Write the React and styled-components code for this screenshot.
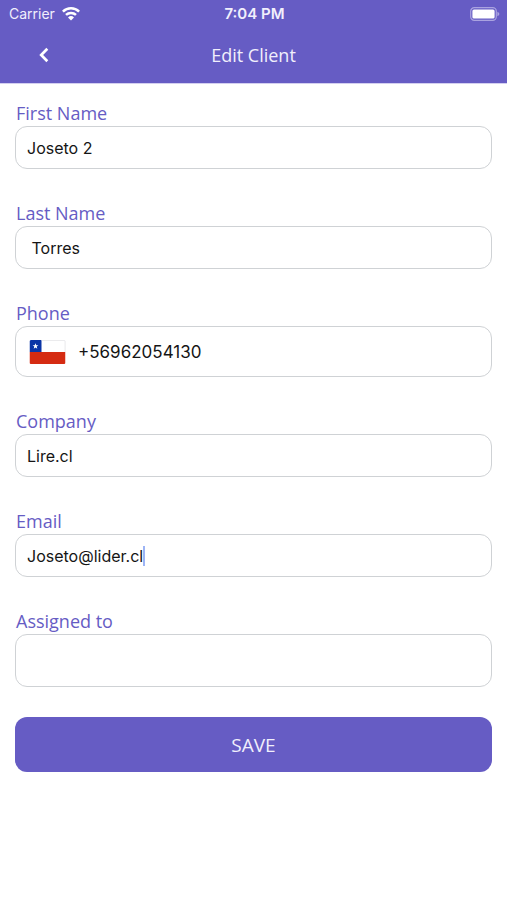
import styled, { createGlobalStyle } from "styled-components";

const colors = {
  primary: "#665cc4",
  light: "#f1effc",
  border: "#cfd2d5",
  text: "#151515",
  caret: "#9db4f5",
};

export default function App() {
  return (
    <Screen>
      <GlobalStyle />
      <Header>
        <StatusBar>
          <Carrier>
            Carrier
            <WifiIcon />
          </Carrier>
          <Time>7:04 PM</Time>
          <BatteryIcon />
        </StatusBar>
        <NavBar>
          <BackButton type="button" aria-label="Back">
            <ChevronIcon />
          </BackButton>
          <Title>Edit Client</Title>
        </NavBar>
      </Header>
      <Form onSubmit={(e) => e.preventDefault()}>
        <Field id="firstName" label="First Name" value="Joseto 2" />
        <Field id="lastName" label="Last Name" value=" Torres" />
        <Field
          id="phone"
          label="Phone"
          type="tel"
          value="+56962054130"
          height={51}
          icon={<ChileFlag />}
        />
        <Field id="company" label="Company" value="Lire.cl" />
        <Field id="email" label="Email" value="Joseto@lider.cl" editing />
        <Field id="assignedTo" label="Assigned to" value="" height={53} />
        <SaveButton type="submit">SAVE</SaveButton>
      </Form>
    </Screen>
  );
}

function Field({ id, label, value, type = "text", height = 43, icon, editing }) {
  return (
    <FieldGroup>
      <Label htmlFor={id}>{label}</Label>
      <InputBox $height={height}>
        {icon}
        <Input id={id} name={id} type={type} defaultValue={value} $fit={editing} />
        {editing && <Caret />}
      </InputBox>
    </FieldGroup>
  );
}

function WifiIcon() {
  return (
    <svg width="18" height="14" viewBox="0 0 18 14" aria-hidden="true">
      <g fill="none" stroke="#fff" strokeWidth="2.5">
        <path d="M0.9 4.6 A11.6 11.6 0 0 1 17.1 4.6" />
        <path d="M4 7.9 A7.2 7.2 0 0 1 14 7.9" />
      </g>
      <path d="M9 13.5 L6 10.5 A4.4 4.4 0 0 1 12 10.5 Z" fill="#fff" />
    </svg>
  );
}

function BatteryIcon() {
  return (
    <Battery width="30" height="14" viewBox="0 0 30 14" aria-hidden="true">
      <rect
        x="0.7"
        y="0.7"
        width="25.6"
        height="12.6"
        rx="3.6"
        fill="none"
        stroke="#aaa3e0"
        strokeWidth="1.2"
      />
      <rect x="2.4" y="2.4" width="22.2" height="9.2" rx="1.6" fill="#fff" />
      <path d="M27.4 4.8 Q29.4 5.6 29.4 7 Q29.4 8.4 27.4 9.2 Z" fill="#aaa3e0" />
    </Battery>
  );
}

function ChevronIcon() {
  return (
    <svg width="10" height="16" viewBox="0 0 10 16" aria-hidden="true">
      <path
        d="M8.3 1.8 L2.2 8 L8.3 14.2"
        fill="none"
        stroke="#fff"
        strokeWidth="2.7"
      />
    </svg>
  );
}

function ChileFlag() {
  return (
    <Flag viewBox="0 0 36 24" role="img" aria-label="Chile">
      <clipPath id="flagShape">
        <rect width="36" height="24" rx="1.5" />
      </clipPath>
      <g clipPath="url(#flagShape)">
        <rect width="36" height="24" fill="#fff" />
        <rect y="12" width="36" height="12" fill="#d52b12" />
        <rect width="12" height="12" fill="#0a35a6" />
        <path
          d="M6 3.2 L6.8 5.2 L8.9 5.3 L7.2 6.6 L7.8 8.7 L6 7.5 L4.2 8.7 L4.8 6.6 L3.1 5.3 L5.2 5.2 Z"
          fill="#fff"
        />
      </g>
      <path
        d="M12 0.4 H34.5 Q35.6 0.4 35.6 1.5 V12"
        fill="none"
        stroke="#e3e3e6"
        strokeWidth="0.8"
      />
    </Flag>
  );
}

const GlobalStyle = createGlobalStyle`
  * {
    box-sizing: border-box;
  }

  body {
    margin: 0;
    background-color: #fff;
    font-family: "Open Sans", sans-serif;
  }
`;

const Screen = styled.div`
  min-height: 100vh;
  background-color: #fff;
`;

const Header = styled.header`
  background-color: ${colors.primary};
  border-bottom: 1px solid #d3cff0;
`;

const StatusBar = styled.div`
  display: grid;
  grid-template-columns: 1fr auto 1fr;
  align-items: center;

  height: 27px;
  padding: 0 7px 0 9px;

  color: ${colors.light};
  font-family: Inter, sans-serif;
  font-size: 14px;
`;

const Carrier = styled.span`
  display: flex;
  align-items: center;
  gap: 7px;
`;

const Time = styled.span`
  font-size: 15px;
  font-weight: 600;
`;

const Battery = styled.svg`
  justify-self: end;
`;

const NavBar = styled.div`
  display: grid;
  grid-template-columns: 48px 1fr 48px;
  align-items: center;

  height: 56px;
  padding: 0 20px;
`;

const BackButton = styled.button`
  display: flex;
  align-items: center;
  justify-content: center;

  height: 40px;
  padding: 0;
  border: none;
  background: none;
  cursor: pointer;
`;

const Title = styled.h1`
  margin: 0;

  color: ${colors.light};
  font-size: 18px;
  font-weight: 400;
  line-height: 25px;
  text-align: center;
`;

const Form = styled.form`
  display: flex;
  flex-direction: column;

  padding: 17px 15px;
`;

const FieldGroup = styled.div`
  display: flex;
  flex-direction: column;
  margin-bottom: 32px;

  &:last-of-type {
    margin-bottom: 30px;
  }
`;

const Label = styled.label`
  padding-left: 1px;

  color: ${colors.primary};
  font-size: 18px;
  line-height: 25px;
`;

const InputBox = styled.div`
  display: flex;
  align-items: center;

  height: ${(props) => props.$height}px;
  padding: 0 11px;
  border: 1px solid ${colors.border};
  border-radius: 12px;
`;

const Input = styled.input`
  flex: ${(props) => (props.$fit ? "0 1 auto" : "1")};
  field-sizing: ${(props) => (props.$fit ? "content" : "fixed")};

  min-width: 0;
  padding: 0;
  border: none;
  outline: none;
  background: none;

  color: ${colors.text};
  font-family: Inter, sans-serif;
  font-size: ${(props) => (props.type === "tel" ? 17 : 16)}px;
  line-height: 24px;
`;

const Caret = styled.span`
  width: 2px;
  height: 20px;
  background-color: ${colors.caret};
`;

const Flag = styled.svg`
  flex: none;
  width: 37px;
  height: 24px;
  margin: 0 12px 0 2px;
`;

const SaveButton = styled.button`
  height: 55px;
  border: none;
  border-radius: 12px;
  background-color: ${colors.primary};

  color: ${colors.light};
  font-family: inherit;
  font-size: 19px;
  cursor: pointer;
`;
